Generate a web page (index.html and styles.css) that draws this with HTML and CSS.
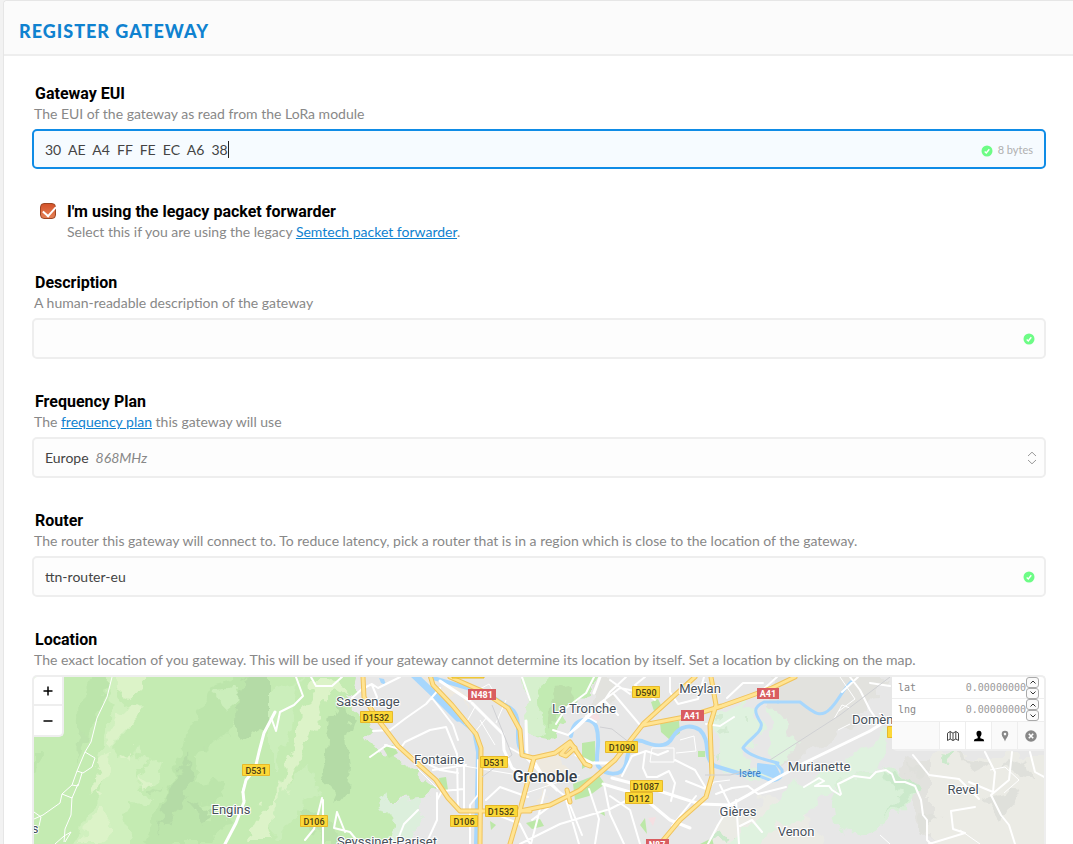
FILE: index.html
```html
<!DOCTYPE html>
<html lang="en">
<head>
<meta charset="utf-8">
<title>Register Gateway</title>
<link rel="stylesheet" href="styles.css">
</head>
<body>
<svg class="defs" aria-hidden="true">
  <symbol id="ok" viewBox="0 0 12 12"><circle cx="6" cy="6" r="5.5" fill="#6dfc86"/><path d="M3.7 6.4 5.3 7.9 8.3 4.3" fill="none" stroke="#fff" stroke-width="1.4"/></symbol>
</svg>
<main class="panel">
  <header class="panel-head"><h1>Register Gateway</h1></header>
  <form class="form">
    <div class="field">
      <label class="name" for="eui">Gateway EUI</label>
      <p class="hint">The EUI of the gateway as read from the LoRa module</p>
      <label class="box box-active" for="eui">
        <input id="eui" class="fit" type="text" value="30  AE  A4  FF  FE  EC  A6  38"><span class="caret"></span>
        <span class="status"><svg class="ok ok-low"><use href="#ok"/></svg>8 bytes</span>
      </label>
    </div>

    <div class="check">
      <input id="legacy" type="checkbox" checked>
      <div>
        <label class="check-name" for="legacy">I'm using the legacy packet forwarder</label>
        <p class="hint check-hint">Select this if you are using the legacy <a href="#">Semtech packet forwarder</a>.</p>
      </div>
    </div>

    <div class="field">
      <label class="name" for="description">Description</label>
      <p class="hint">A human-readable description of the gateway</p>
      <div class="box"><input id="description" class="grow" type="text"><svg class="ok"><use href="#ok"/></svg></div>
    </div>

    <div class="field">
      <label class="name" for="plan">Frequency Plan</label>
      <p class="hint">The <a href="#">frequency plan</a> this gateway will use</p>
      <label class="box" for="plan">
        <select id="plan" class="fit"><option>Europe</option></select><em>868MHz</em>
        <svg class="updown" viewBox="0 0 10 14"><path d="M1 5 5 1.200 9 5M1 9l4 3.800L9 9"/></svg>
      </label>
    </div>

    <div class="field">
      <label class="name" for="router">Router</label>
      <p class="hint">The router this gateway will connect to. To reduce latency, pick a router that is in a region which is close to the location of the gateway.</p>
      <div class="box"><input id="router" class="grow" type="text" value="ttn-router-eu"><svg class="ok"><use href="#ok"/></svg></div>
    </div>

    <section class="field field-map">
      <h2 class="name">Location</h2>
      <p class="hint">The exact location of you gateway. This will be used if your gateway cannot determine its location by itself. Set a location by clicking on the map.</p>
      <div class="map">
        <svg class="tiles" viewBox="34 677 1010 200" preserveAspectRatio="xMinYMin slice" role="img" aria-label="Map of Grenoble">
          <filter id="relief" filterUnits="userSpaceOnUse" x="20" y="663" width="1040" height="230">
            <feTurbulence type="fractalNoise" baseFrequency="0.06" numOctaves="3" seed="4" result="noise"/>
            <feDisplacementMap in="SourceGraphic" in2="noise" scale="22" xChannelSelector="R" yChannelSelector="G"/>
          </filter>
          <rect x="34" y="677" width="1010" height="200" fill="#e7e7e7"/>
          <g filter="url(#relief)">
          <!-- western hills -->
          <path fill="#c4ebb2" d="M20 663H363L356 689 344 694 352 706 364 717 371 727 370 740 382 757 391 760 407 765 423 778 439 791 428 797 394 798 379 802 390 812 395 824 390 844 386 893H20z"/>
          <path fill="#dcefdc" d="M378 800 389 795 396 800 425 797 425 815 416 828 407 844 389 844 395 823 388 813z"/>
          <path fill="#bce5ab" d="M96 667h14l-5 30-10 25-15 15-2-20zM215 684l25-6 15 2-15 30-10 20-20 20-15 5-5 70-20 20-25-5 15-30 15-35 10-40zM185 785l38-5 2 18-30 8zM34 750l8 0-2 20-6 5zM155 844l30-32 45 5-20 27z"/>
          <path fill="#b4dba6" d="M250 667h20v55l-22 14-13-8 3-28zM188 753l2 34-13 26-17 20 8-38zM191 798l20 14-5 10-16-12zM329 720l14-20 10 20-6 18 3 30-2 20-12 14-10-18-6-18z"/>
          <path fill="#bce3ac" d="M300 806l20 10 25 28h-20zM74 745l6-20 5 15-12 22zM164 783l-12 8 0 8zM205 745l4 0-2 7z"/>
          <path fill="#d0f0be" d="M108 667l12 12-4 18 12 9 13 5-12 18-15 20 6 8 18-6 10 12-12 8 8 12 4-18 12-3-4 22-17 2 15 19-25-2-9 12 10 18-10 19H77l8-34 14-22 5-14-4-22 7-30z"/>
          <path fill="#dcf3c8" d="M120 667h26l-2 21-15 12-11-7zM115 711l20-5 5 11-16 16-14 18-2-5zM102 760l10-5-2 20-20 18-2-6zM87 822l13-16 12 6-1 18-16 14H83zM122 755l8-5-3 8zM96 790l8 5-6 3zM146 780l8 5-8 2zM262 812l18-22 14-60 26-44 6 8-20 54-24 48-13 46h-22zM312 679l20 0 15 11-20 4-14-2z"/>
          <path fill="#cbeebb" d="M215 690l20-5 5 12-15 13zM270 690l30-10-6 35-24 60zM276 800l20-26 16-10 5 30-20 20-24 30z"/>
          <path fill="#c2ebb2" d="M520 663h82l-18 34-18 6-7 26-12 10-12-2-8-30z"/>
          <path fill="#d6f0cd" d="M522 663h27l-11 40 3 32-9 3-7-30z"/>
          <path fill="#bbdfaa" d="M556 690l20-3-6 18-10 12-14 16 3-22z"/>
          <!-- eastern parks and slopes -->
          <path fill="#e2e2de" d="M770 663h80l40 18-50 55-70 35zM898 752l40 8 30 20 30-20 56-5v40l-60 30-40-18-25 30-15-20zM595 667l25 28-30 22z"/>
          <path fill="#ebebe5" d="M716 820l54-25 40 20 30 69H690zM930 755h134v129H930z"/>
          <path fill="#dff2df" d="M713 709l30-6 14 0-4 10 13 17-22 20-2 12 18 9 16 6-25 1-24-8-8-20z"/>
          <path fill="#d3ead2" d="M719 731l8-4 1 8-7 2zM716 713l6 0 0 5-6 1zM742 714l4 0 0 7-4 0zM715 756l6-1 0 8z"/>
          <path fill="#dff2df" d="M770 708l12 8 12 30-8 14-16 6zM770 803l14-10 42-22 38-22 22-22 4 22-16 20-40 20-22 16-4 17-34 4-20 28h-34z"/>
          <path fill="#d9f0d8" d="M835 786l17-6 32-14 26 10 3 20-28 30-22 12-28-13-4-22z"/>
          <path fill="#cbe9cb" d="M880 770l34 8 3 10-18 20-14 10 16-20zM940 760l18-8-6 11zM708 842l12-14 10 16z"/>
          <path fill="#dfe0db" d="M905 758l18 10-3 10zM918 810l24 5-20 18zM980 800l40-10-20 35zM960 755l34 6-20 10zM1000 770l24-12 8 18z"/>
          <path fill="#eee9df" d="M535 755l22-4 12 20-20 14-14-8zM535 800l8-17 3 18zM655 716l7-2 2 6zM420 677l30 5 20 20-20-5z"/>
          </g>
          <path fill="#bce8a8" d="M383 748l10-3 5 8-9 5zM439 778l7-1 2 13-7 2zM490 821l6 4-5 5zM660 723l19-2 1 12-10 7-9-8zM573 784l25-10 7 10-16 12-14 4zM582 743l13-2 0 20-13 8zM651 702l7-3 4 8-8 4zM698 751h7v6h-7zM526 823l14-4 4 7-12 3zM598 812l6-2 1 6zM640 825l5-7 2 16zM700 844l12-6 2 8z"/>
          <path fill="#f5dfe2" d="M590 716l8-3 2 6-7 2zM648 818l8-1-3 9z"/>
          <!-- water -->
          <g fill="none" stroke="#a7d7fd" stroke-width="4" stroke-linecap="round" stroke-linejoin="round">
            <path stroke-width="7" d="M414 675 437 697 458 718"/>
            <path d="M457 717 474 731 478 752 476 844"/>
            <path d="M430 677 488 694 510 708C519 714 518 724 518 735 518 747 520 750 526 754"/>
            <path d="M571 736C573 717 591 716 596 726 602 743 594 756 598 766 606 776 622 777 626 764 629 746 632 738 642 741 658 748 668 746 672 738 680 724 692 725 700 730 712 742 702 758 715 766L738 773"/>
            <path stroke-width="3" d="M778 702 764 702C753 707 754 712 761 723 764 732 747 740 743 748 749 756 766 760 778 763"/>
            <path stroke-width="3" d="M778 702H800C815 714 821 718 830 709 838 702 842 690 852 681"/>
            <path stroke-width="3" d="M738 773 752 773 772 781C780 780 783 776 782 770L776 763"/>
            <path fill="#a7d7fd" stroke-width="2" d="M758 764 775 766 779 774 773 777 758 771z"/>
          </g>
          <path fill="#a7d7fd" d="M379 678l5 1 2 6-5-2z"/>
          <!-- minor roads -->
          <g fill="none" stroke="#fff" stroke-width="1" stroke-linejoin="round">
            <path d="M112 677 107 697 97 718 91 742 85 752 77 771 72 785 62 794 60 803 43 815 34 819M85 752 95 758 92 767 83 773 77 771M72 785 78 786 82 773M62 794 72 798 78 784M72 797 71 815 65 829 64 842M34 812 41 817 39 826M55 844 64 836 71 832 65 842"/>
            <path d="M245 782 242 792 245 801M469 695l20-11 5 8M480 720l15 25M506 700l-10 23M465 725l10-18 12 10-12 15M418 769l20 20M458 765l60 10M520 795l60-20M652 748h22v14h-24zM680 740l14-4 2 15-20 2M702 800l12-18 16-2M840 677l15 22-16 12M928 690l-20-13M834 719l8-14 8 3M838 730l12-6M990 770l15-3 14 13-15 13M880 835l10 9M960 830l20 14"/>
          </g>
          <g fill="none" stroke="#fff" stroke-width="2" stroke-linejoin="round" stroke-linecap="round">
            <path stroke-width="3" d="M275 712 264 733 259 752 255 769 246 780 243 792 244 802 236 823 225 844"/>
            <path d="M296 677 303 696 294 705 280 712 276 731 272 720M311 677 316 686 332 686 342 677M322 798 317 818 314 829 305 840M323 800 323 844M337 812 334 828 350 832 360 844M337 812 345 832M396 844l8-20 14-14"/>
            <path d="M352 698 362 689 372 684 378 688 400 677M372 685 377 697 370 714M373 731 390 730 406 718 426 704 440 688M385 745 400 749 405 742 430 730 446 727 457 754 458 810M387 745 370 757M432 698 440 708 453 725 458 740M400 750l40 20 18 3M433 770l33-5M437 800l5-9 22-2M426 844 437 820 437 793M464 767v45M478 760v35l-8 10v39"/>
            <path stroke-width="3" d="M472 703 503 734 504 750 512 768 528 778M440 681l30 20M526 721l1 37 30 32"/>
            <path d="M528 758 510 748M528 797 500 787 486 800M535 762l12 20 18 14 14 48M490 812l30 12 10 20M545 790l-14 54M558 800l-26 20M566 795l16 40M589 789l10 30-4 25M604 784l6 30 14 30M553 730l15 5 10-8 24-23 8-12 16-15M570 733l30-30 20-15 15 3M586 716l10 6M604 700l14 15M613 693 640 725M594 677l-8 16-20 15-10 16M655 700l-20-15 10-8M670 677v15l8 12 20-5 6-22M520 844l40-20 50-15 45-23M640 844l-10-34-20-14M672 826l24-30M530 700l-8-23M610 680l20 14"/>
            <path stroke-width="3" d="M603 784 640 795 670 820 690 828M612 778 650 788 700 804 730 805 748 795 770 782 804 763 870 731 886 721M576 755l16 8 20 0M600 677l-6 16"/>
            <path d="M622 776l10-20 14-5 12 4 10-4M645 752l-2 16 4 9 10 0 12-6 6 12-4 18M675 760l20 10 12 20M706 789l-20-8M716 794l16-6 16-2 10 8 28-7M720 785l10 20-12 20-10 19M736 800l3 44M740 826l12-6 10 12M706 724l14 2 14-9M727 698l16-15 20 0M777 677l-20 18"/>
            <path d="M850 677 860 690 870 710 880 724M842 692l16-15M870 683l20 3M804 787l15-9 5 3-9 5 14 0 3 4 8 5M841 794l-3-10 8-4 8-4 16 2 6-6 10-2 6 4 3 8 10 0 10 4 6 14 2 15 4 5 0 20 8 8M1012 752l-3 28-18 15 10 20 8 10 6 19M913 755l16 20 30 4 20 20M975 807l-24 4 2 18 12 4-36 11M1030 752l5 20 9 5M985 752l10 20-2 20-24-10"/>
          </g>
          <!-- main roads -->
          <defs>
            <g id="main">
              <path d="M363 677 364 697 376 717 398 746 436 780 448 798 460 811 530 811"/>
              <path d="M430 675 433 685 452 705 476 734 481 748 480 844"/>
              <path d="M450 677 482 691 508 708 520 730 522 755 533 758 555 753 570 742 585 764 590 766"/>
              <path d="M534 758 520 810 510 844M520 811 550 805 580 790 615 760 644 723 695 677"/>
              <path d="M643 725 690 716 722 706 750 696 772 688 795 677M711 677 716 705 710 725 712 776 706 797 680 820 660 844"/>
              <path d="M561 754 570 744 575 748 566 756zM567 790l3 12"/>
            </g>
          </defs>
          <use href="#main" class="road-edge"/>
          <use href="#main" class="road-fill"/>
          <path fill="none" stroke="#cfd0d3" d="M492 705l20 50-30 22M600 727l12 2 18 14M770 760l70-45 50-38M705 775l25 0 20-5"/>
          <!-- road shields -->
          <g class="shields">
            <g fill="#fcd838" stroke="#e6b92c">
              <path d="M242.500 764.500h27v11h-27zM300.500 815.500h27v11h-27zM360.500 711.500h32v11h-32zM480.500 756.500h27v11h-27zM485.500 805.500h32v11h-32zM450.500 815.500h27v11h-27zM632.500 686.500h27v11h-27zM605.500 741.500h32v11h-32zM630.500 780.500h32v11h-32zM625.500 792.500h27v11h-27zM887.500 726.500h27v11h-27zM452 667h32v11h-32z"/>
            </g>
            <path fill="#d95d60" d="M468 689h28v11h-28zM681 710h23v11h-23zM757 688h22v11h-22zM646 839h23v11h-23z"/>
            <text x="256" y="774">D531</text><text x="314" y="825">D106</text><text x="376" y="721">D1532</text>
            <text x="494" y="766">D531</text><text x="501" y="815">D1532</text><text x="464" y="825">D106</text>
            <text x="646" y="696">D590</text><text x="622" y="751">D1090</text><text x="646" y="790">D1087</text><text x="639" y="802">D112</text>
            <g class="red"><text x="482" y="698">N481</text><text x="692" y="719">A41</text><text x="768" y="697">A41</text><text x="657" y="848">N87</text></g>
          </g>
          <!-- places -->
          <g class="places">
            <text x="368" y="706">Sassenage</text><text x="439" y="764">Fontaine</text><text x="231" y="814">Engins</text>
            <text x="387" y="846">Seyssinet-Pariset</text><text x="584" y="713">La Tronche</text><text x="700" y="693">Meylan</text>
            <text x="738" y="816">Gières</text><text x="796" y="836">Venon</text><text x="819" y="771">Murianette</text>
            <text x="963" y="794">Revel</text><text class="from-left" x="852" y="724">Domène</text><text x="35" y="833">s</text>
            <text class="city" x="545" y="782">Grenoble</text>
            <text class="river" x="750" y="777">Isère</text>
          </g>
        </svg>
        <div class="zoom">
          <button type="button" aria-label="Zoom in"><svg viewBox="0 0 10 10"><path d="M0.500 5h9M5 0.500v9"/></svg></button>
          <button type="button" aria-label="Zoom out"><svg viewBox="0 0 10 10"><path d="M0.500 5h9"/></svg></button>
        </div>
        <div class="coords">
          <div class="coord"><label for="lat">lat</label><input id="lat" type="text" placeholder="0.00000000">
            <span class="spin"><button type="button" aria-label="Increase latitude"><svg viewBox="0 0 8 6"><path d="M1.500 4.500 4 2l2.500 2.500"/></svg></button><button type="button" aria-label="Decrease latitude"><svg viewBox="0 0 8 6"><path d="M1.500 1.500 4 4l2.500-2.500"/></svg></button></span></div>
          <div class="coord"><label for="lng">lng</label><input id="lng" type="text" placeholder="0.00000000">
            <span class="spin"><button type="button" aria-label="Increase longitude"><svg viewBox="0 0 8 6"><path d="M1.500 4.500 4 2l2.500 2.500"/></svg></button><button type="button" aria-label="Decrease longitude"><svg viewBox="0 0 8 6"><path d="M1.500 1.500 4 4l2.500-2.500"/></svg></button></span></div>
          <div class="tools">
            <button type="button" class="on" aria-label="Map"><svg viewBox="0 0 12 12"><path d="M.5 3.200 3.200 1.500 6 3.200 8.800 1.500 11.500 3.200V10.500L8.800 9 6 10.500 3.200 9 .5 10.500zM3.200 1.500V9M6 3.200v7.300M8.800 1.500V9" fill="none" stroke="#444"/></svg></button>
            <button type="button" class="on" aria-label="My location"><svg viewBox="0 0 12 12"><path d="M6 .8C8 .8 8.700 2.200 8.500 4 8.300 5.500 7.600 6.200 7.300 6.800V8.200L10.500 9.200 11.200 11.200H.8L1.500 9.200 4.700 8.200V6.800C4.400 6.200 3.700 5.500 3.500 4 3.300 2.200 4 .8 6 .8z"/></svg></button>
            <button type="button" aria-label="Marker"><svg viewBox="0 0 12 12"><path fill="#888" fill-rule="evenodd" d="M6 .8A3.300 3.300 0 0 1 9.300 4.200C9.300 6.500 6.600 8.800 6 11.500 5.400 8.800 2.700 6.500 2.700 4.200A3.300 3.300 0 0 1 6 .8zM6 2.800a1.300 1.300 0 1 0 0 2.600 1.300 1.300 0 0 0 0-2.600z"/></svg></button>
            <button type="button" aria-label="Clear"><svg viewBox="0 0 12 12"><circle cx="6" cy="6" r="5.800" fill="#888"/><path d="M3.800 3.800l4.400 4.400M8.200 3.800 3.800 8.200" stroke="#fff" stroke-width="1.600"/></svg></button>
          </div>
        </div>
      </div>
    </section>
  </form>
</main>
</body>
</html>
```
FILE: styles.css
```css
* { box-sizing: border-box; }
body {
  margin: 0;
  height: 100vh;
  overflow: hidden;
  padding-left: 3px;
  background: #f2f2f2;
  font: 14px/20px Lato, sans-serif;
  color: #888;
}
.defs { display: none; }
h1, h2, p { margin: 0; }
a { color: #0f82d0; }
input, select, button { font: inherit; color: inherit; border: 0; padding: 0; margin: 0; background: none; outline: 0; }

.panel {
  display: flex;
  flex-direction: column;
  height: 100%;
  background: #fff;
  border-left: 1px solid #e6e6e6;
  border-top: 1px solid #e6e6e6;
  border-top-left-radius: 4px;
}
.panel-head {
  padding: 19px 15px 12px;
  background: #fbfbfb;
  border-bottom: 2px solid #eee;
  border-top-left-radius: 4px;
}
h1 {
  font-size: 18px;
  line-height: 22px;
  font-weight: 900;
  letter-spacing: 1px;
  text-transform: uppercase;
  color: #0f82d0;
}

.form {
  flex: 1;
  min-height: 0;
  display: flex;
  flex-direction: column;
  padding: 28px 27px 0 28px;
}
.field { margin-bottom: 33px; }
.name, .check-name {
  display: block;
  font: bold 16px/20px Roboto, sans-serif;
  color: #000;
}
.name { padding-left: 3px; }
.hint { padding: 0 2px 5px; }
.box {
  display: flex;
  align-items: center;
  height: 41px;
  padding: 0 11px;
  border: 2px solid #eee;
  border-radius: 5px;
  background: #fdfdfd;
  color: #444;
}
.box-active { height: 40px; padding-top: 1px; border-color: #0f8ce6; background: #f6fbff; }
.fit { field-sizing: content; appearance: none; }
.grow { flex: 1; min-width: 0; }
.caret { width: 1px; height: 17px; background: #222; }
.status {
  display: flex;
  align-items: center;
  gap: 5px;
  margin-left: auto;
  font-size: 11px;
  color: #b0b0b0;
}
.ok { width: 12px; height: 12px; margin-right: -2px; }
.status .ok { margin-right: 0; }
.ok-low { margin-top: 2px; }
.box em { margin-left: 7px; color: #888; }
.updown { width: 10px; height: 14px; margin-left: auto; margin-right: -4px; fill: none; stroke: #999; }

.check { display: flex; gap: 11px; margin-bottom: 31px; padding-left: 8px; }
.check-hint { padding: 0; }
.check input {
  appearance: none;
  width: 16px;
  height: 16px;
  margin-top: 1px;
  border: 1px solid #9c4523;
  border-radius: 4px;
  background: linear-gradient(#d4532a, #e58055);
}
.check input:checked::before {
  content: "";
  display: block;
  width: 11px;
  height: 6px;
  margin: 2px 0 0 2px;
  border: solid #fff;
  border-width: 0 0 2px 2px;
  transform: rotate(-48deg);
}

.field-map { flex: 1; min-height: 180px; display: flex; flex-direction: column; margin: 0; }
.map {
  position: relative;
  flex: 1;
  min-height: 0;
  border: 2px solid #eee;
  border-bottom: 0;
  border-radius: 5px 5px 0 0;
  overflow: hidden;
}
.tiles { position: absolute; inset: 0; width: 100%; height: 100%; }
.road-edge, .road-fill { fill: none; stroke: #f0c35c; stroke-width: 5px; stroke-linejoin: round; stroke-linecap: round; }
.road-fill { stroke: #ffe493; stroke-width: 3px; }
.shields { font: 500 9px Roboto, sans-serif; text-anchor: middle; }
.shields text { fill: #4b3f14; }
.shields .red text { fill: #fff; font-weight: 700; }
.places { font: 13px Roboto, sans-serif; text-anchor: middle; }
.places text { fill: #46505a; stroke: #fff; stroke-width: 2px; paint-order: stroke; }
.places .from-left { text-anchor: start; }
.places .city { font-size: 16px; font-weight: 500; fill: #333d48; }
.places .river { font-size: 10px; fill: #3a7fc4; stroke: none; }

.zoom { position: absolute; top: 0; left: 0; border: solid #eee; border-width: 0 2px 2px 0; border-radius: 0 0 5px 0; background: #fff; }
.zoom button { display: grid; place-items: center; width: 28px; height: 27px; }
.zoom button + button { height: 31px; border-top: 2px solid #eee; }
.zoom svg { width: 10px; height: 10px; stroke: #000; stroke-width: 1.5; }

.coords {
  position: absolute;
  top: 0;
  right: 0;
  width: 152px;
  background: #fff;
  border-bottom: 2px solid #eee;
  border-radius: 0 0 0 5px;
  font: 10px/20px "DejaVu Sans Mono", monospace;
}
.coord { display: flex; align-items: center; height: 22px; padding: 0 5px 0 6px; border-bottom: 1px solid #eee; }
.coord + .coord { height: 23px; }
.coord input { flex: 1; min-width: 0; text-align: right; }
.coord input::placeholder { color: #999; }
.spin { display: grid; }
.spin button { display: grid; place-items: center; width: 13px; height: 11px; border: 1px solid #aaa; border-radius: 3px; background: #fafafa; }
.spin svg { width: 8px; height: 6px; fill: none; stroke: #333; }
.tools { display: flex; justify-content: flex-end; padding-right: 1px; background: #fafafa; }
.tools button { display: grid; place-items: center; width: 26px; height: 27px; border-left: 1px solid #eee; }
.tools .on { background: #fff; }
.tools svg { width: 12px; height: 12px; }
```
